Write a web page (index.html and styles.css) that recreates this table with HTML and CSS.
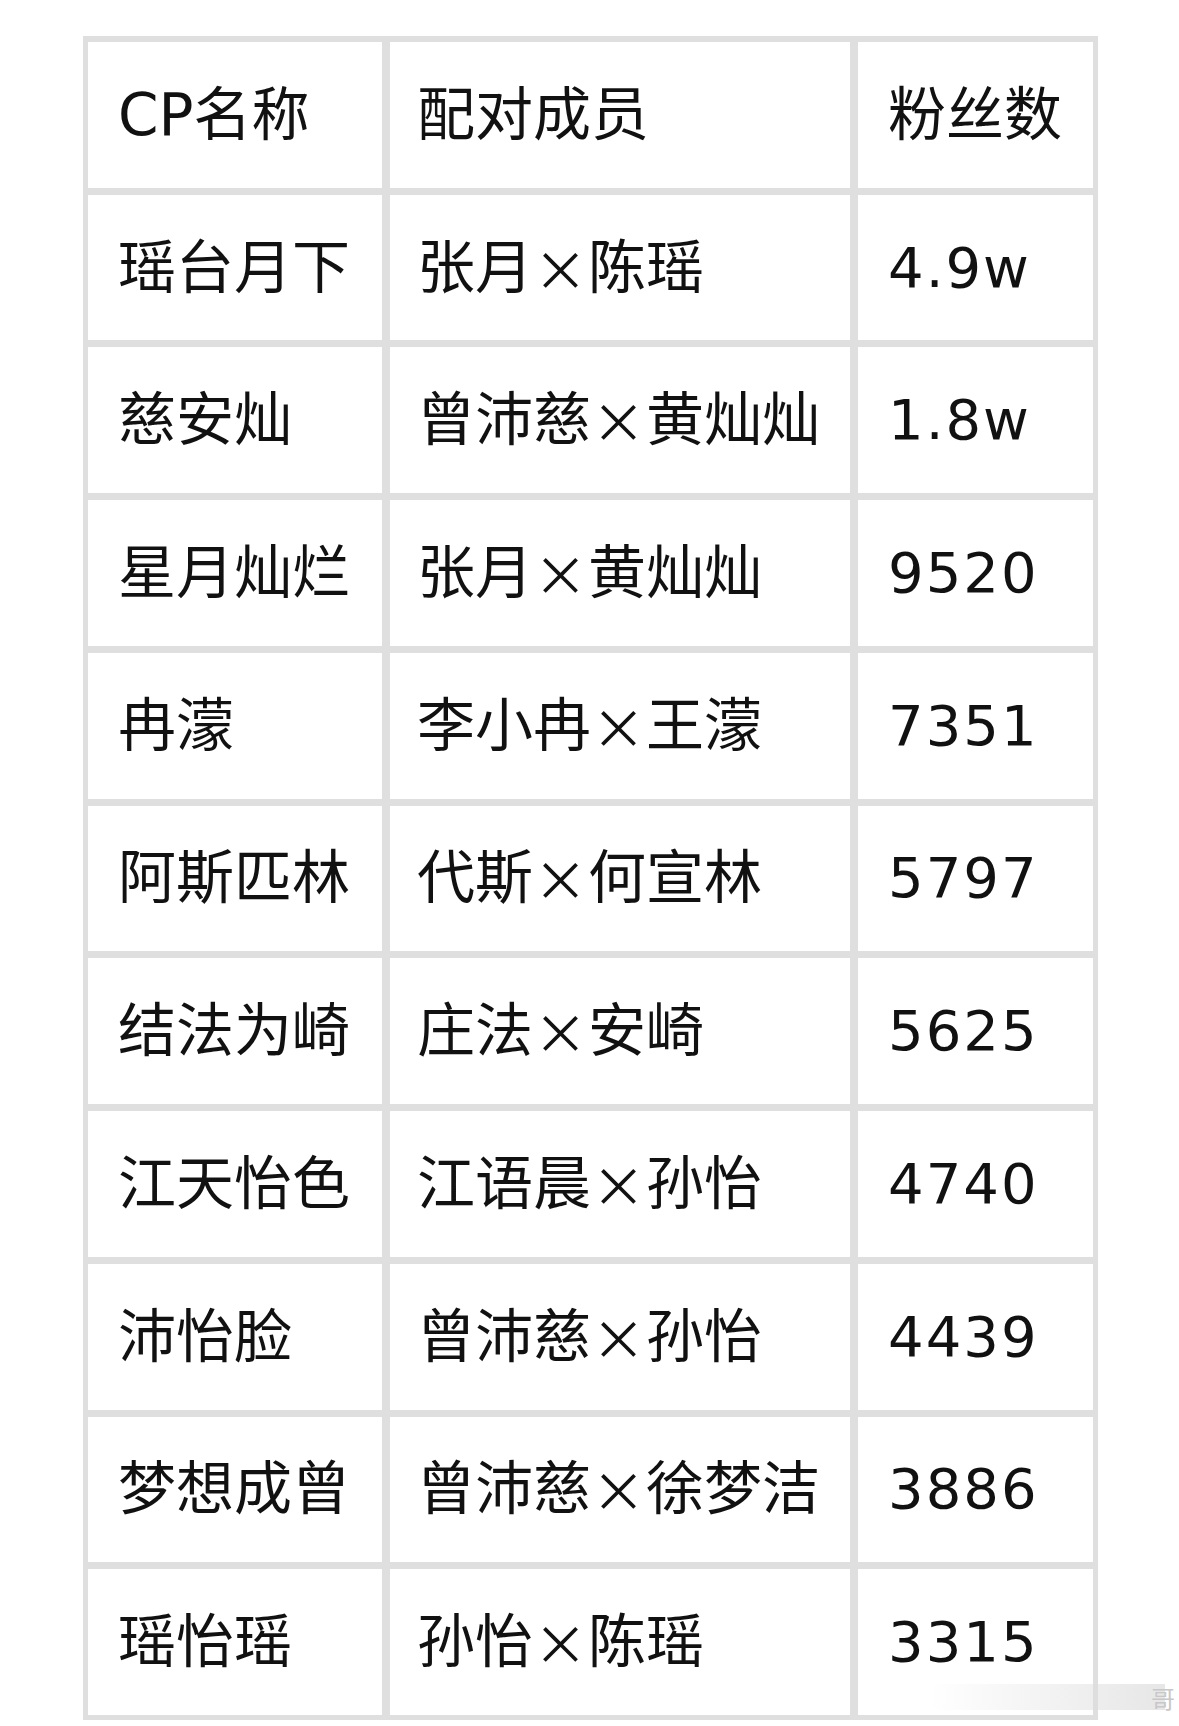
FILE: index.html
```html
<!DOCTYPE html>
<html lang="zh-CN">
<head>
<meta charset="utf-8">
<title>CP 粉丝数</title>
<link rel="stylesheet" href="styles.css">
</head>
<body>
<div class="page">
  <div class="table">
    <div class="cell">CP名称</div><div class="cell pair">配对成员</div><div class="cell">粉丝数</div>
    <div class="cell">瑶台月下</div><div class="cell pair">张月<span class="x">×</span>陈瑶</div><div class="cell num">4.9w</div>
    <div class="cell">慈安灿</div><div class="cell pair">曾沛慈<span class="x">×</span>黄灿灿</div><div class="cell num">1.8w</div>
    <div class="cell">星月灿烂</div><div class="cell pair">张月<span class="x">×</span>黄灿灿</div><div class="cell num">9520</div>
    <div class="cell">冉濛</div><div class="cell pair">李小冉<span class="x">×</span>王濛</div><div class="cell num">7351</div>
    <div class="cell">阿斯匹林</div><div class="cell pair">代斯<span class="x">×</span>何宣林</div><div class="cell num">5797</div>
    <div class="cell">结法为崎</div><div class="cell pair">庄法<span class="x">×</span>安崎</div><div class="cell num">5625</div>
    <div class="cell">江天怡色</div><div class="cell pair">江语晨<span class="x">×</span>孙怡</div><div class="cell num">4740</div>
    <div class="cell">沛怡脸</div><div class="cell pair">曾沛慈<span class="x">×</span>孙怡</div><div class="cell num">4439</div>
    <div class="cell">梦想成曾</div><div class="cell pair">曾沛慈<span class="x">×</span>徐梦洁</div><div class="cell num">3886</div>
    <div class="cell">瑶怡瑶</div><div class="cell pair">孙怡<span class="x">×</span>陈瑶</div><div class="cell num">3315</div>
  </div>
  <div class="watermark"><span class="wm-bar"></span><span class="wm-text">哥</span></div>
</div>
</body>
</html>
```

FILE: styles.css
```css
html, body {
  margin: 0;
  padding: 0;
  background: #ffffff;
}

.page {
  position: relative;
  width: 1179px;
  height: 1726px;
  padding: 36px 0 0 83px;
  box-sizing: border-box;
  font-family: "DejaVu Sans", "Noto Sans CJK SC", sans-serif;
  color: #111111;
}

.table {
  display: grid;
  grid-template-columns: 294px 460px 235px;
  grid-template-rows: repeat(11, 1fr);
  column-gap: 8px;
  row-gap: 7px;
  width: 1015px;
  height: 1684px;
  box-sizing: border-box;
  padding: 6px 5px 5px 5px;
  background: #dfdfdf;
}

.cell {
  background: #ffffff;
  display: flex;
  align-items: center;
  padding-left: 30px;
  font-size: 58px;
  line-height: 1;
  white-space: nowrap;
}

.pair {
  padding-left: 27px;
}

.num {
  font-size: 56px;
  letter-spacing: 2px;
}

.x {
  font-family: "Noto Sans CJK SC", sans-serif;
  display: inline-block;
  width: 55px;
  text-align: center;
  font-size: 54px;
}

.watermark {
  position: absolute;
  left: 930px;
  top: 1680px;
  width: 245px;
  height: 34px;
  display: flex;
  align-items: center;
  justify-content: flex-end;
}

.wm-bar {
  position: absolute;
  left: 0;
  top: 4px;
  width: 235px;
  height: 26px;
  background: linear-gradient(to right, rgba(235,235,235,0), rgba(220,220,220,0.7));
}

.wm-text {
  position: relative;
  font-family: "Noto Sans CJK SC", sans-serif;
  font-size: 24px;
  color: #c8c8c8;
}
```
